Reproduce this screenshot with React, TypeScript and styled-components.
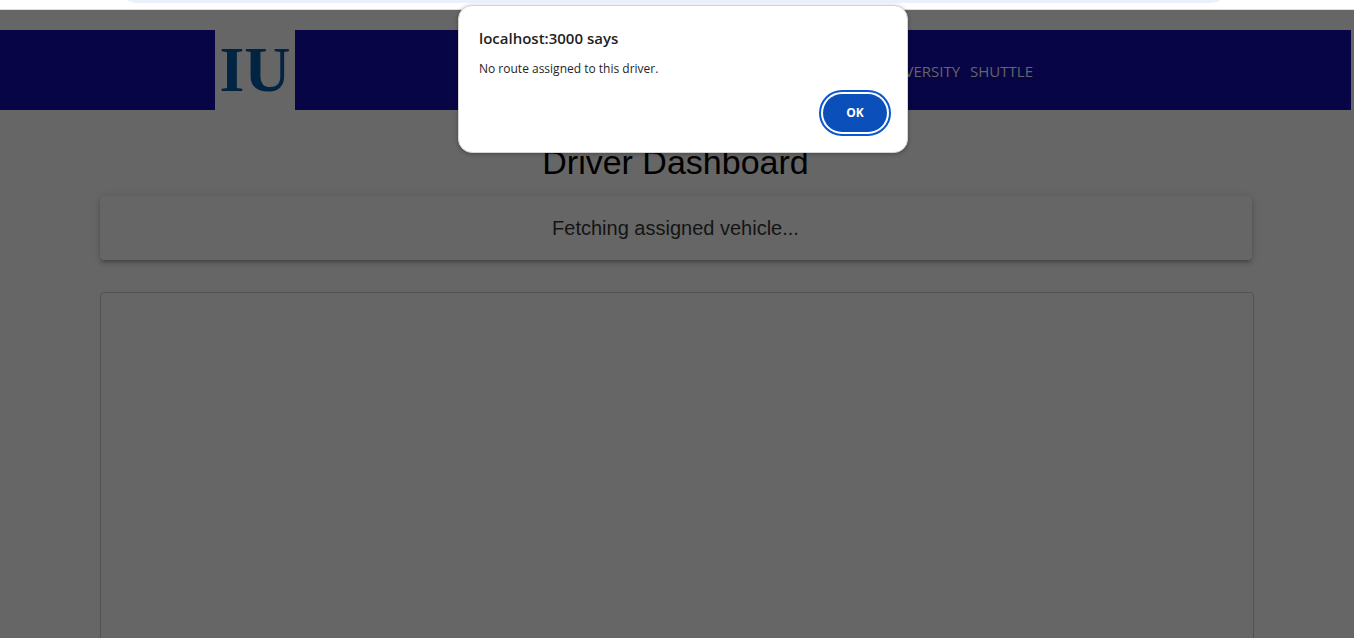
import React from "react";
import styled, { createGlobalStyle } from "styled-components";

const uiFont = `"Open Sans", "Noto Sans", sans-serif`;
const pageFont = `"Liberation Sans", Arial, sans-serif`;

const GlobalStyle = createGlobalStyle`
  *, *::before, *::after { box-sizing: border-box; }
  body { margin: 0; background: #666666; font-family: ${pageFont}; }
`;

const Window = styled.div`
  position: relative;
  display: flex;
  flex-direction: column;
  height: 100vh;
  overflow: hidden;
`;

const BrowserBar = styled.div`
  flex: none;
  height: 10px;
  padding: 0 134px 0 128px;
  background: #ffffff;
  border-bottom: 1px solid #dcdddd;
`;

const AddressField = styled.div`
  height: 3px;
  background: #e9f1fb;
  border-radius: 0 0 12px 12px / 0 0 3px 3px;
`;

const Page = styled.div`
  flex: none;
  padding: 20px 3px 0 0;
`;

const Header = styled.header`
  display: flex;
  align-items: center;
  justify-content: space-between;
  height: 80px;
  padding: 0 318px 0 215px;
  background: #070545;
`;

const Logo = styled.div`
  display: flex;
  align-items: center;
  justify-content: center;
  width: 80px;
  height: 80px;
  background: #666666;
  color: #002442;
  font: 700 64px/80px "Liberation Serif", "Times New Roman", serif;
`;

const Brand = styled.div`
  display: flex;
  gap: 10px;
  padding-top: 1px;
  color: #666666;
  font: 400 15px/20px ${uiFont};
`;

const Main = styled.main`
  max-width: 1200px;
  margin: 0 auto;
  padding: 32px 24px;
`;

const Title = styled.h1`
  margin: 0 0 14px;
  color: #000000;
  font: 400 34px/40px ${pageFont};
  text-align: center;
`;

const StatusCard = styled.section`
  padding: 16px;
  border-radius: 4px;
  background: #666666;
  box-shadow: 0 3px 3px -2px rgba(0, 0, 0, 0.2), 0 3px 4px 0 rgba(0, 0, 0, 0.14),
    0 1px 8px 0 rgba(0, 0, 0, 0.12);
`;

const StatusText = styled.h2`
  margin: 0;
  color: #141414;
  font: 400 20px/32px ${pageFont};
  text-align: center;
`;

const MapPanel = styled.section`
  width: calc(100% + 2px);
  height: 502px;
  margin-top: 32px;
  border: 1px solid #525252;
  border-radius: 4px;
`;

const Dialog = styled.div`
  position: absolute;
  top: 5px;
  left: calc(50% - 219px);
  display: flex;
  flex-direction: column;
  width: 450px;
  height: 148px;
  padding: 22px 20px 20px;
  border: 1px solid #d5d5d5;
  border-radius: 14px;
  background: #ffffff;
  box-shadow: 0 1px 4px rgba(0, 0, 0, 0.3);
  color: #1f1f1f;
  font-family: ${uiFont};
`;

const DialogTitle = styled.h2`
  margin: 0 0 11px;
  font-size: 15px;
  font-weight: 600;
  line-height: 20px;
`;

const DialogText = styled.p`
  margin: 0;
  font-size: 12px;
  line-height: 20px;
`;

const OkButton = styled.button`
  align-self: flex-end;
  width: 64px;
  height: 38px;
  margin-top: auto;
  padding: 0;
  border: 0;
  border-radius: 19px;
  outline: 2px solid #0b57d0;
  outline-offset: 2px;
  background: #0b4fba;
  color: #ffffff;
  font: 700 12px/20px ${uiFont};
`;

export default function App() {
  return (
    <>
      <GlobalStyle />
      <Window>
        <BrowserBar>
          <AddressField />
        </BrowserBar>
        <Page>
          <Header>
            <Logo>IU</Logo>
            <Brand>
              <span>UNIVERSITY</span>
              <span>SHUTTLE</span>
            </Brand>
          </Header>
          <Main>
            <Title>Driver Dashboard</Title>
            <StatusCard>
              <StatusText>Fetching assigned vehicle...</StatusText>
            </StatusCard>
            <MapPanel aria-label="Route map" />
          </Main>
        </Page>
        <Dialog role="alertdialog" aria-labelledby="alert-title" aria-describedby="alert-text">
          <DialogTitle id="alert-title">localhost:3000 says</DialogTitle>
          <DialogText id="alert-text">No route assigned to this driver.</DialogText>
          <OkButton type="button">OK</OkButton>
        </Dialog>
      </Window>
    </>
  );
}
